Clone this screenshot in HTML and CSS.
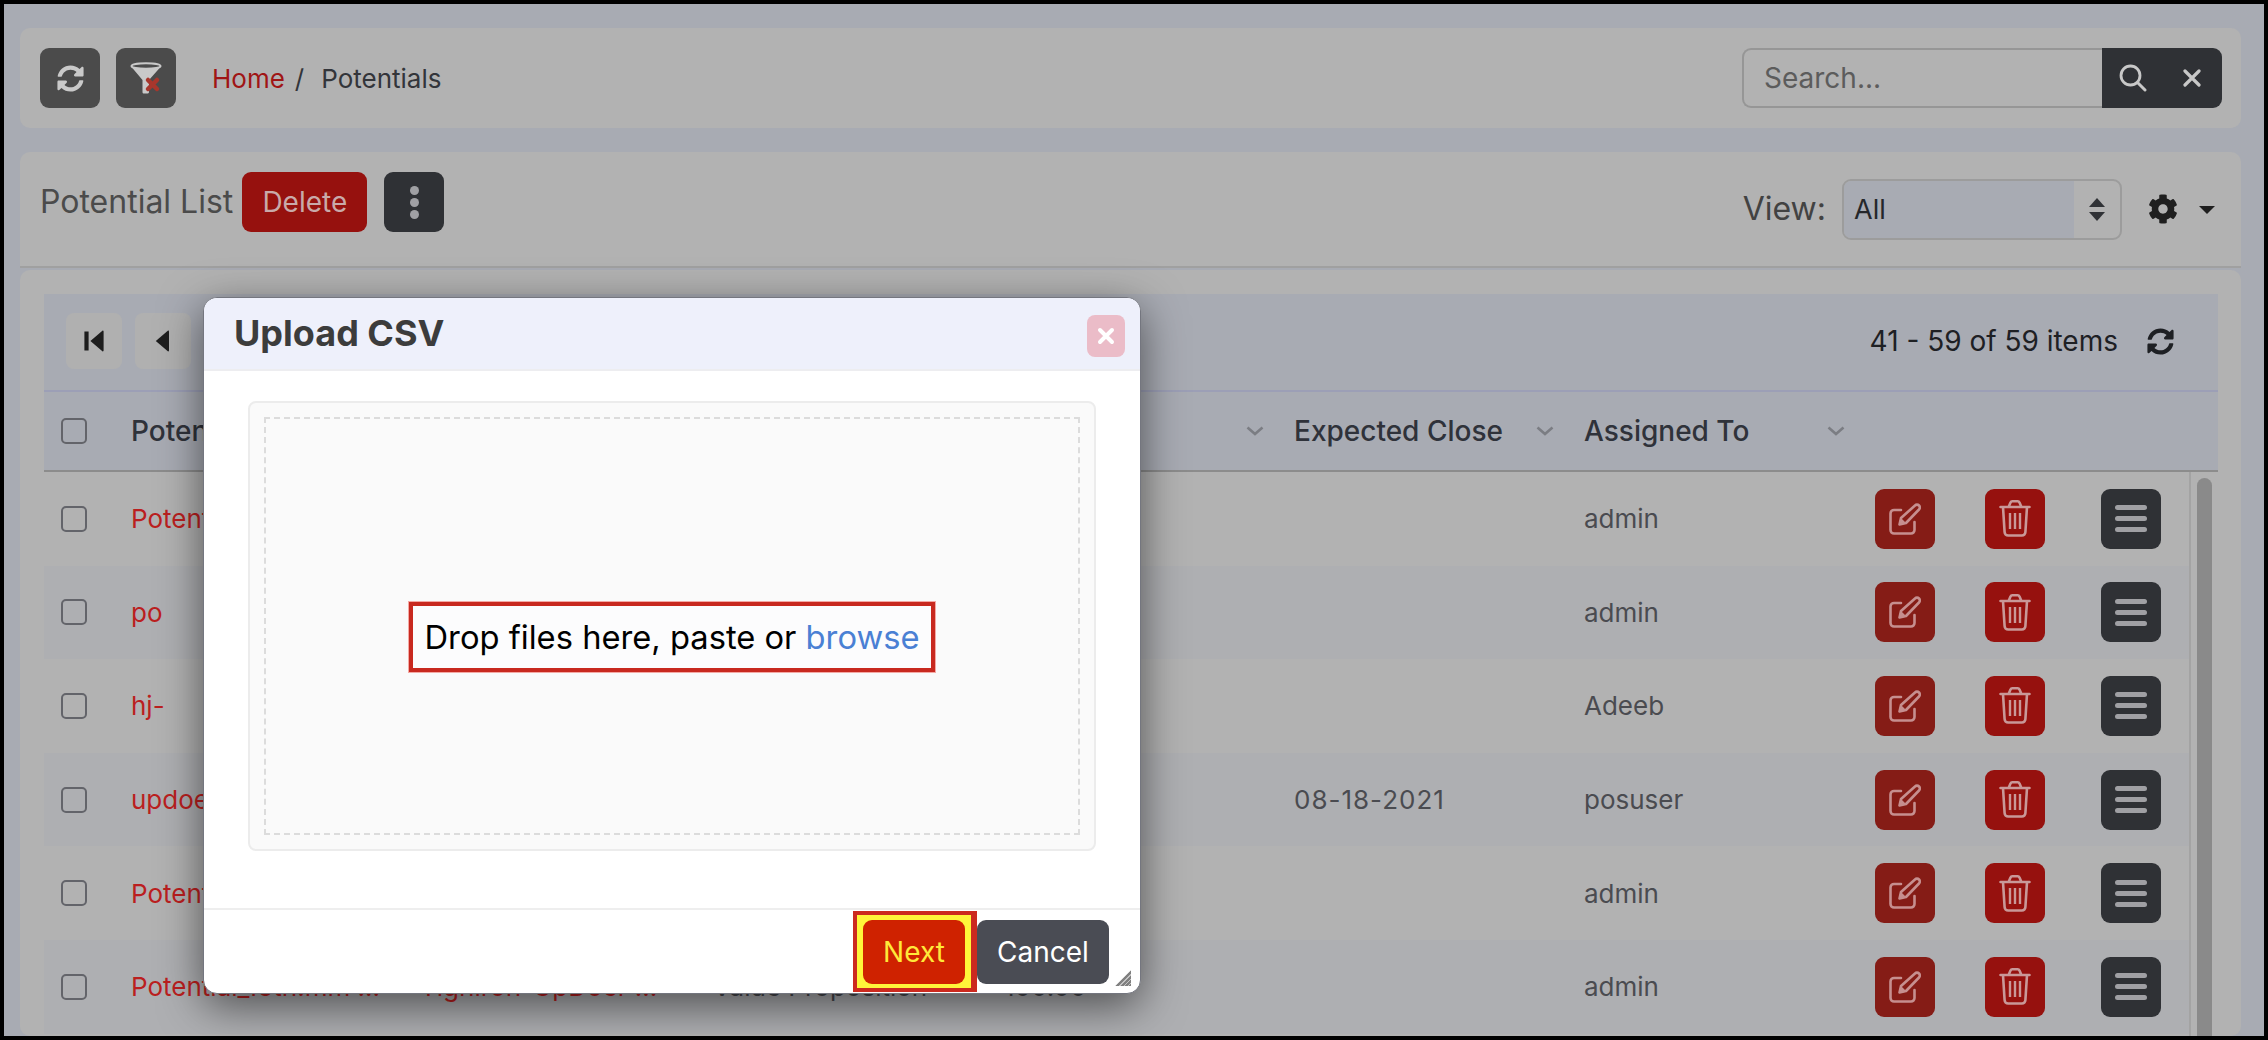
FILE: index.html
```html
<!DOCTYPE html>
<html lang="en">
<head>
  <meta charset="UTF-8" />
  <title>Potentials</title>
  <link rel="stylesheet" href="styles.css">
</head>
<body>
  <svg class="sprite" xmlns="http://www.w3.org/2000/svg">
    <symbol id="i-sync" viewBox="0 0 512 512">
      <path fill="currentColor" d="M370.72 133.28C339.458 104.008 298.888 87.962 255.848 88c-77.458.068-144.328 53.178-162.791 126.85-1.344 5.363-6.122 9.15-11.651 9.15H24.103c-7.498 0-13.194-6.807-11.807-14.176C33.933 94.924 134.813 8 256 8c66.448 0 126.791 26.136 171.315 68.685L463.03 40.97C478.149 25.851 504 36.559 504 57.941V192c0 13.255-10.745 24-24 24H345.941c-21.382 0-32.09-25.851-16.971-40.971l41.75-41.749zM32 296h134.059c21.382 0 32.09 25.851 16.971 40.971l-41.75 41.75c31.262 29.273 71.835 45.319 114.876 45.28 77.418-.07 144.315-53.144 162.787-126.849 1.344-5.363 6.122-9.15 11.651-9.15h57.304c7.498 0 13.194 6.807 11.807 14.176C478.067 417.076 377.187 504 256 504c-66.448 0-126.791-26.136-171.315-68.685L48.97 471.03C33.851 486.149 8 475.441 8 454.059V320c0-13.255 10.745-24 24-24z"/>
    </symbol>
    <symbol id="i-edit" viewBox="0 0 32 32">
      <path fill="none" stroke="currentColor" stroke-width="2.6" stroke-linecap="round" stroke-linejoin="round" d="M12 7H5a3.5 3.5 0 0 0-3.5 3.5V27A3.5 3.5 0 0 0 5 30.5h17a3.5 3.5 0 0 0 3.5-3.5v-8"/>
      <path fill="none" stroke="currentColor" stroke-width="2.6" stroke-linejoin="round" d="M26 2.5a2.8 2.8 0 0 1 4 0 2.8 2.8 0 0 1 0 4L17 20l-6.500 1.500L12 15z"/>
      <path fill="currentColor" d="M11 21l1.500-5.500 4 4z"/>
    </symbol>
    <symbol id="i-trash" viewBox="0 0 32 37">
      <path fill="none" stroke="currentColor" stroke-width="2.6" stroke-linecap="round" stroke-linejoin="round" d="M1.500 7h29M10 6l1.500-3.500a2 2 0 0 1 1.800-1.200h5.400a2 2 0 0 1 1.800 1.200L22 6M4 7l1.600 25a3.500 3.500 0 0 0 3.500 3.500h13.800a3.500 3.500 0 0 0 3.500-3.500L28 7"/>
      <path fill="none" stroke="currentColor" stroke-width="2.4" d="M11 13v16M16 13v16M21 13v16"/>
    </symbol>
    <symbol id="i-chev" viewBox="0 0 18 10">
      <path fill="none" stroke="currentColor" stroke-width="2.6" d="M1.500 1.500L9 8l7.500-6.500"/>
    </symbol>
  </svg>

  <div class="frame">
    <div class="card topbar">
      <button class="icon-btn grey"><svg class="ic-26"><use href="#i-sync"/></svg></button>
      <button class="icon-btn grey">
        <svg class="ic-funnel" viewBox="0 0 32 32">
          <ellipse cx="16" cy="4" rx="14.500" ry="2.800" fill="none" stroke="#c9c9c9" stroke-width="2"/>
          <path fill="#c9c9c9" d="M1.500 5c3 2 26 2 29 0L19 18v12c0 1-1 1.500-2 1.500h-3c-1 0-1.500-.5-1.500-1.500V18z"/>
          <path stroke="#a8362c" stroke-width="4.500" stroke-linecap="round" d="M18 18l9 9M27 18l-9 9"/>
        </svg>
      </button>
      <nav class="crumbs"><a>Home</a><span class="slash">/</span><span>Potentials</span></nav>
      <div class="search">
        <span class="search-input">Search...</span>
        <div class="search-btns">
          <svg class="ic-search" viewBox="0 0 28 28"><circle cx="11.500" cy="11.500" r="9.500" fill="none" stroke="currentColor" stroke-width="2.800"/><path stroke="currentColor" stroke-width="3" stroke-linecap="round" d="M18.500 18.500l7.500 7.500"/></svg>
          <svg class="ic-x" viewBox="0 0 18 18"><path stroke="currentColor" stroke-width="3.200" stroke-linecap="round" d="M2 2l14 14M16 2L2 16"/></svg>
        </div>
      </div>
    </div>

    <div class="card listbar">
      <span class="list-title">Potential List</span>
      <button class="btn delete">Delete</button>
      <button class="icon-btn dark kebab"><i></i><i></i><i></i></button>
      <span class="view-label">View:</span>
      <div class="view-select">
        <span class="view-value">All</span>
        <span class="view-arrows"><b class="up"></b><b class="down"></b></span>
      </div>
      <svg class="ic-gear" viewBox="0 0 512 512"><path fill="currentColor" d="M487.400 315.700l-42.600-24.600c4.300-23.200 4.300-47 0-70.200l42.600-24.600c4.900-2.800 7.100-8.600 5.500-14-11.100-35.600-30-67.800-54.700-94.600-3.800-4.100-10-5.100-14.800-2.300L380.800 110c-17.900-15.400-38.500-27.300-60.800-35.100V25.800c0-5.600-3.900-10.500-9.400-11.700-36.700-8.200-74.300-7.800-109.200 0-5.500 1.200-9.400 6.100-9.400 11.700V75c-22.200 7.900-42.800 19.800-60.800 35.100L88.700 85.500c-4.900-2.800-11-1.900-14.800 2.300-24.700 26.700-43.600 58.900-54.700 94.600-1.700 5.400.6 11.200 5.500 14L67.300 221c-4.300 23.200-4.300 47 0 70.200l-42.600 24.600c-4.900 2.800-7.100 8.600-5.500 14 11.100 35.600 30 67.800 54.700 94.600 3.800 4.100 10 5.100 14.800 2.300l42.600-24.600c17.900 15.400 38.500 27.300 60.800 35.100v49.200c0 5.600 3.900 10.500 9.400 11.700 36.700 8.200 74.300 7.800 109.200 0 5.500-1.200 9.400-6.100 9.400-11.700v-49.200c22.200-7.900 42.800-19.800 60.800-35.100l42.600 24.600c4.900 2.800 11 1.900 14.800-2.300 24.700-26.700 43.600-58.900 54.700-94.600 1.500-5.500-.7-11.300-5.600-14.100zM256 336c-44.100 0-80-35.900-80-80s35.900-80 80-80 80 35.900 80 80-35.900 80-80 80z"/></svg>
      <span class="caret"></span>
    </div>

    <div class="card tablecard">
      <div class="grid">
        <div class="pager">
          <button class="page-btn"><svg class="ic-page" viewBox="0 0 20 20"><path fill="currentColor" d="M2 2h3.500v16H2zM7 10l10-8.500c.5-.4 1-.1 1 .5v16c0 .6-.5.9-1 .5z"/></svg></button>
          <button class="page-btn"><svg class="ic-page" viewBox="0 0 20 20"><path fill="currentColor" d="M4 10l10-8.500c.5-.4 1-.1 1 .5v16c0 .6-.5.9-1 .5z"/></svg></button>
          <span class="count">41 - 59 of 59 items</span>
          <svg class="ic-26 pager-sync"><use href="#i-sync"/></svg>
        </div>

        <div class="row head">
          <div class="c-check"><span class="check"></span></div>
          <div class="th">Potential Name</div>
          <div class="th">Account Name</div>
          <div class="th">Sales Stage</div>
          <div class="th">Amount <svg class="chev"><use href="#i-chev"/></svg></div>
          <div class="th">Expected Close <svg class="chev"><use href="#i-chev"/></svg></div>
          <div class="th">Assigned To <svg class="chev"><use href="#i-chev"/></svg></div>
        </div>

        <div class="tbody">
          <div class="rows">
            <div class="row">
              <div class="c-check"><span class="check"></span></div>
              <div class="td link">Potential_new</div><div class="td"></div><div class="td"></div><div class="td"></div><div class="td"></div>
              <div class="td">admin</div>
              <div class="act"><button class="row-btn edit"><svg class="ic-edit"><use href="#i-edit"/></svg></button></div>
              <div class="act"><button class="row-btn trash"><svg class="ic-trash"><use href="#i-trash"/></svg></button></div>
              <div class="act"><button class="row-btn menu"><i></i><i></i><i></i></button></div>
            </div>
            <div class="row alt">
              <div class="c-check"><span class="check"></span></div>
              <div class="td link">po</div><div class="td"></div><div class="td"></div><div class="td"></div><div class="td"></div>
              <div class="td">admin</div>
              <div class="act"><button class="row-btn edit"><svg class="ic-edit"><use href="#i-edit"/></svg></button></div>
              <div class="act"><button class="row-btn trash"><svg class="ic-trash"><use href="#i-trash"/></svg></button></div>
              <div class="act"><button class="row-btn menu"><i></i><i></i><i></i></button></div>
            </div>
            <div class="row">
              <div class="c-check"><span class="check"></span></div>
              <div class="td link">hj-</div><div class="td"></div><div class="td"></div><div class="td"></div><div class="td"></div>
              <div class="td">Adeeb</div>
              <div class="act"><button class="row-btn edit"><svg class="ic-edit"><use href="#i-edit"/></svg></button></div>
              <div class="act"><button class="row-btn trash"><svg class="ic-trash"><use href="#i-trash"/></svg></button></div>
              <div class="act"><button class="row-btn menu"><i></i><i></i><i></i></button></div>
            </div>
            <div class="row alt">
              <div class="c-check"><span class="check"></span></div>
              <div class="td link">updoer</div><div class="td"></div><div class="td"></div><div class="td"></div>
              <div class="td date">08-18-2021</div>
              <div class="td">posuser</div>
              <div class="act"><button class="row-btn edit"><svg class="ic-edit"><use href="#i-edit"/></svg></button></div>
              <div class="act"><button class="row-btn trash"><svg class="ic-trash"><use href="#i-trash"/></svg></button></div>
              <div class="act"><button class="row-btn menu"><i></i><i></i><i></i></button></div>
            </div>
            <div class="row">
              <div class="c-check"><span class="check"></span></div>
              <div class="td link">Potential_new</div><div class="td"></div><div class="td"></div><div class="td"></div><div class="td"></div>
              <div class="td">admin</div>
              <div class="act"><button class="row-btn edit"><svg class="ic-edit"><use href="#i-edit"/></svg></button></div>
              <div class="act"><button class="row-btn trash"><svg class="ic-trash"><use href="#i-trash"/></svg></button></div>
              <div class="act"><button class="row-btn menu"><i></i><i></i><i></i></button></div>
            </div>
            <div class="row alt">
              <div class="c-check"><span class="check"></span></div>
              <div class="td link">Potential_16th.mm ...</div>
              <div class="td link">Tighiron-UpDoer ...</div>
              <div class="td">Value Proposition</div>
              <div class="td">100.00</div>
              <div class="td"></div>
              <div class="td">admin</div>
              <div class="act"><button class="row-btn edit"><svg class="ic-edit"><use href="#i-edit"/></svg></button></div>
              <div class="act"><button class="row-btn trash"><svg class="ic-trash"><use href="#i-trash"/></svg></button></div>
              <div class="act"><button class="row-btn menu"><i></i><i></i><i></i></button></div>
            </div>
          </div>
          <div class="scrollbar"><span class="thumb"></span></div>
        </div>
      </div>
    </div>

    <div class="modal">
      <div class="modal-head">
        <span class="modal-title">Upload CSV</span>
        <button class="modal-close"><svg viewBox="0 0 18 18"><path stroke="#fff" stroke-width="4" stroke-linecap="round" d="M3 3l12 12M15 3L3 15"/></svg></button>
      </div>
      <div class="modal-body">
        <div class="drop">
          <div class="drop-inner">
            <div class="drop-text">Drop files here, paste or <span class="browse">browse</span></div>
          </div>
        </div>
      </div>
      <div class="modal-foot">
        <div class="next-mark"><button class="btn next">Next</button></div>
        <button class="btn cancel">Cancel</button>
        <span class="grip"></span>
      </div>
    </div>
  </div>
</body>
</html>
```

FILE: styles.css
```css
* {
  box-sizing: border-box;
}
html, body {
  margin: 0;
  height: 100%;
}
body {
  font-family: Inter, 'Noto Sans', sans-serif;
  font-size: 26px;
  color: #4a4b50;
  background: #000;
}
button {
  font-family: inherit;
  border: none;
  padding: 0;
}
.sprite {
  display: none;
}
.frame {
  position: relative;
  width: 2268px;
  height: 1040px;
  border: 4px solid #000;
  background: #a8abb3;
  padding: 24px 23px 0 16px;
  overflow: hidden;
  display: flex;
  flex-direction: column;
}
.card {
  background: #b2b2b2;
  border-radius: 10px;
}

/* top bar */
.topbar {
  height: 100px;
  padding: 20px 19px 20px 20px;
  display: flex;
  align-items: center;
  gap: 16px;
  margin-bottom: 24px;
}
.icon-btn {
  width: 60px;
  height: 60px;
  border-radius: 9px;
  display: flex;
  align-items: center;
  justify-content: center;
  flex: none;
}
.grey {
  background: #4b4b4b;
  color: #c9c9c9;
}
.dark {
  background: #2f3135;
}
.ic-26 {
  width: 27px;
  height: 27px;
}
.ic-funnel {
  width: 32px;
  height: 32px;
}
.crumbs {
  margin-left: 20px;
  color: #33353a;
  display: flex;
  align-items: center;
}
.crumbs a {
  color: #a01515;
}
.slash {
  margin: 0 17px 0 10px;
}
.search {
  margin-left: auto;
  display: flex;
  height: 60px;
  width: 480px;
}
.search-input {
  width: 360px;
  border: 2px solid #969696;
  border-right: none;
  border-radius: 9px 0 0 9px;
  padding-left: 20px;
  font-size: 28px;
  color: #5c5c5c;
  display: flex;
  align-items: center;
}
.search-btns {
  flex: 1;
  background: #2f3135;
  border-radius: 0 9px 9px 0;
  color: #c8c8c8;
  display: flex;
  align-items: center;
  padding: 0 21px 0 17px;
  justify-content: space-between;
}
.ic-search {
  width: 28px;
  height: 28px;
}
.ic-x {
  width: 18px;
  height: 18px;
}

/* list bar */
.listbar {
  height: 116px;
  border-radius: 10px 10px 0 0;
  border-bottom: 2px solid #a0a0a0;
  padding: 20px 19px 0 20px;
  display: flex;
  align-items: flex-start;
}
.list-title {
  font-size: 32px;
  line-height: 60px;
  color: #4b4b4b;
  margin-right: 9px;
}
.btn {
  height: 60px;
  border-radius: 9px;
  font-size: 28px;
  color: #c9a9a9;
}
.delete {
  width: 125px;
  background: #96110e;
  margin-right: 17px;
}
.kebab {
  flex-direction: column;
  gap: 3px;
}
.kebab i {
  width: 9px;
  height: 9px;
  border-radius: 50%;
  background: #a0a0a4;
}
.view-label {
  margin-left: auto;
  font-size: 32px;
  line-height: 58px;
  margin-top: 8px;
  color: #424242;
  margin-right: 16px;
}
.view-select {
  width: 280px;
  height: 61px;
  margin-top: 7px;
  border: 2px solid #9c9c9c;
  border-radius: 9px;
  display: flex;
  overflow: hidden;
}
.view-value {
  flex: 1;
  background: #a8abb3;
  padding-left: 10px;
  font-size: 27px;
  line-height: 58px;
  color: #25272b;
}
.view-arrows {
  width: 46px;
  display: flex;
  flex-direction: column;
  align-items: center;
  justify-content: center;
  gap: 5px;
}
.view-arrows b {
  border-left: 8px solid transparent;
  border-right: 8px solid transparent;
}
.up {
  border-bottom: 9px solid #303236;
}
.down {
  border-top: 9px solid #303236;
}
.ic-gear {
  width: 30px;
  height: 32px;
  color: #1f1f1f;
  margin: 21px 0 0 26px;
}
.caret {
  width: 0;
  height: 0;
  border-left: 8px solid transparent;
  border-right: 8px solid transparent;
  border-top: 8px solid #1f1f1f;
  margin: 34px 7px 0 21px;
}

/* table */
.tablecard {
  flex: 1;
  margin-top: 2px;
  padding: 24px 23px 0 24px;
  min-height: 0;
}
.pager {
  height: 98px;
  background: #a8abb3;
  border-bottom: 2px solid #9c9fb6;
  padding: 0 44px 2px 22px;
  display: flex;
  align-items: center;
  gap: 13px;
}
.page-btn {
  width: 56px;
  height: 56px;
  border-radius: 8px;
  background: #b0b0b0;
  color: #1d1d1d;
  display: flex;
  align-items: center;
  justify-content: center;
}
.ic-page {
  width: 24px;
  height: 24px;
}
.count {
  margin-left: auto;
  font-size: 28px;
  color: #1e2024;
  margin-right: 16px;
}
.pager-sync {
  color: #1e2024;
}
.row {
  display: grid;
  grid-template-columns: 87px 289px 293px 291px 290px 290px 291px 110px 116px 88px;
  height: 93.6px;
  align-items: center;
}
.alt {
  background: #aeafb2;
}
.head {
  height: 80px;
  background: #a8abb3;
  border-bottom: 2px solid #8c8c8c;
}
.th {
  font-size: 28px;
  font-weight: 500;
  color: #2f323a;
  padding-right: 30px;
  display: flex;
  align-items: center;
  justify-content: space-between;
  white-space: nowrap;
}
.chev {
  width: 18px;
  height: 10px;
  color: #7b7d83;
}
.c-check {
  padding-left: 17px;
  display: flex;
}
.check {
  width: 26px;
  height: 26px;
  border: 2px solid #63646a;
  border-radius: 5px;
}
.td {
  white-space: nowrap;
}
.date {
  letter-spacing: 1px;
}
.link {
  color: #bb1f1f;
}
.act {
  display: flex;
}
.row-btn {
  width: 60px;
  height: 60px;
  border-radius: 9px;
  display: flex;
  align-items: center;
  justify-content: center;
}
.edit {
  background: #851c16;
  color: #c68f8f;
}
.trash {
  background: #96110e;
  color: #c99898;
}
.menu {
  background: #2f3135;
  flex-direction: column;
  gap: 6px;
}
.menu i {
  width: 32px;
  height: 5px;
  border-radius: 3px;
  background: #a0a0a4;
}
.ic-edit {
  width: 32px;
  height: 32px;
}
.ic-trash {
  width: 32px;
  height: 37px;
}
.tbody {
  display: flex;
  height: 566px;
}
.rows {
  flex: 1;
}
.scrollbar {
  width: 29px;
  flex: none;
  border-left: 2px solid #a3a3a3;
  padding: 6px 6px 0 6px;
}
.thumb {
  display: block;
  height: 700px;
  background: #8a8a8a;
  border-radius: 8px;
}

/* upload modal */
.modal {
  position: absolute;
  left: 199px;
  top: 293px;
  width: 938px;
  height: 697px;
  background: #fff;
  border: 1px solid #74767f;
  border-radius: 14px;
  box-shadow: 0 12px 44px rgba(0, 0, 0, 0.55);
  display: flex;
  flex-direction: column;
  overflow: hidden;
}
.modal-head {
  height: 73px;
  flex: none;
  background: #eef0fb;
  border-bottom: 2px solid #ededf0;
  padding: 0 15px 0 30px;
  display: flex;
  align-items: flex-start;
  justify-content: space-between;
}
.modal-title {
  font-size: 36px;
  font-weight: 700;
  color: #3c3c3c;
  line-height: 70px;
}
.modal-close {
  width: 38px;
  height: 42px;
  margin-top: 17px;
  border-radius: 8px;
  background: #ebbcc8;
  display: flex;
  align-items: center;
  justify-content: center;
}
.modal-close svg {
  width: 18px;
  height: 18px;
}
.modal-body {
  flex: 1;
  padding: 30px 44px 0 44px;
}
.drop {
  height: 450px;
  background: #fafafa;
  border: 2px solid #ececec;
  border-radius: 8px;
  padding: 14px;
}
.drop-inner {
  height: 100%;
  border: 2px dashed #dcdcdc;
  padding-top: 22px;
  display: flex;
  align-items: center;
  justify-content: center;
}
.drop-text {
  font-size: 32.7px;
  color: #000;
  padding: 11px 12px;
  border: 4px solid #c8291f;
  outline: 1px solid #f4a9a4;
  background: #fcfcfd;
  white-space: nowrap;
}
.browse {
  color: #4a80d4;
}
.modal-foot {
  position: relative;
  height: 85px;
  flex: none;
  border-top: 2px solid #eeeeee;
  padding-right: 31px;
  display: flex;
  justify-content: flex-end;
  align-items: flex-start;
}
.next-mark {
  margin-top: 1px;
  padding: 9px 11px 8px 11px;
  background: #fff53a;
  border: 4px solid #cc2a1f;
  border-right-width: 6px;
  width: 124px;
  height: 81px;
  display: flex;
  justify-content: center;
}
.btn.next {
  flex: none;
  width: 102px;
  height: 64px;
  margin-top: -4px;
  background: #cf2200;
  color: #ffe93a;
}
.btn.cancel {
  width: 132px;
  height: 64px;
  margin-top: 10px;
  background: #4a4c54;
  color: #fff;
}
.grip {
  position: absolute;
  right: 9px;
  bottom: 7px;
  width: 16px;
  height: 16px;
  background: repeating-linear-gradient(135deg, #808080 0 2px, #c4c4c4 2px 3px);
  clip-path: polygon(100% 0, 100% 100%, 0 100%);
}
```
